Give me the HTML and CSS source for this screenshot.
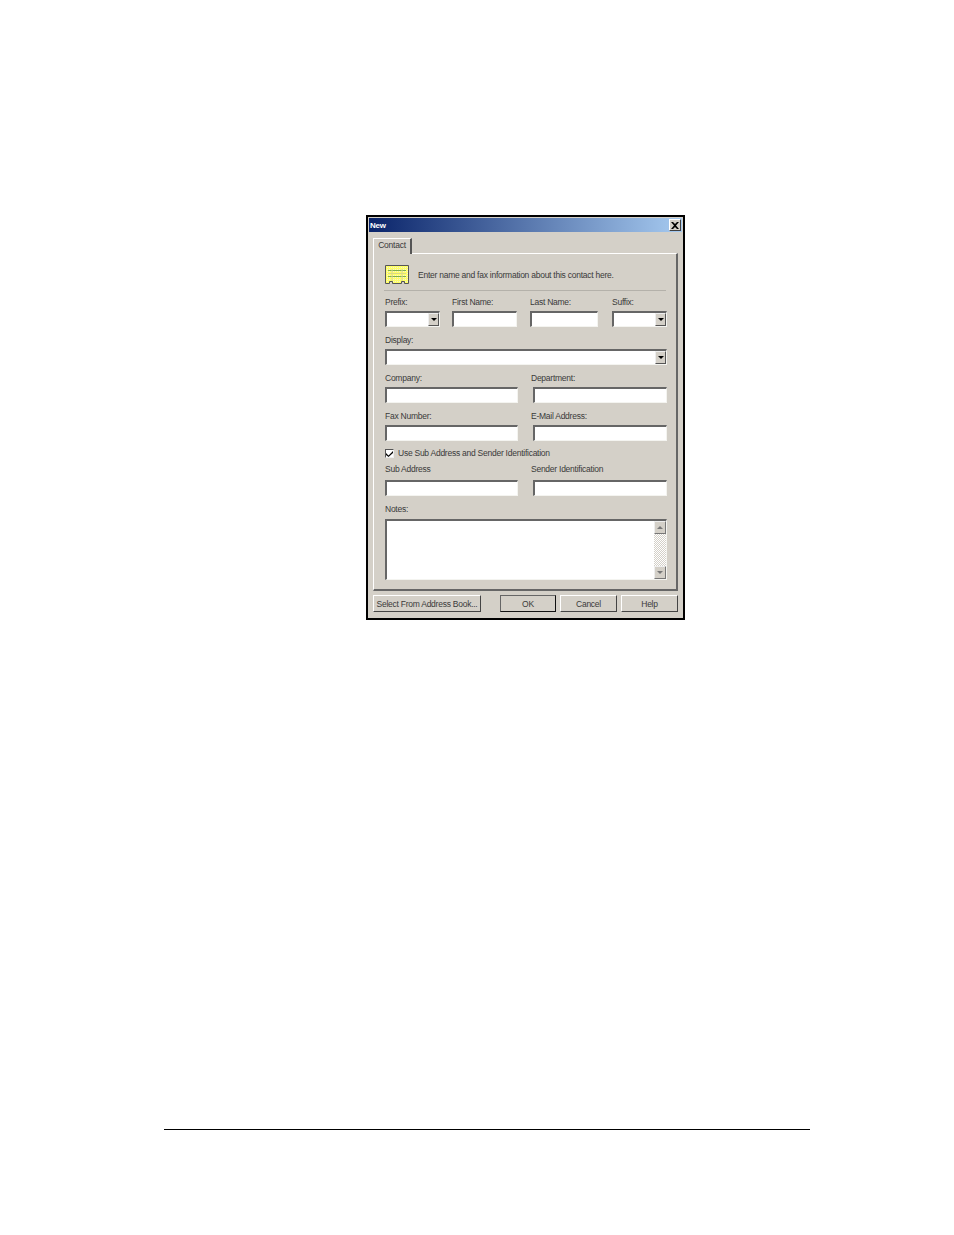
FILE: index.html
```html
<!DOCTYPE html>
<html lang="en">
  <head>
    <meta charset="UTF-8" />
    <title>New Contact</title>
    <link rel="stylesheet" href="styles.css">
  </head>
  <body>
    <div class="dialog">
      <div class="titlebar">
        <span>New</span>
        <span class="close">
          <svg width="8" height="7" viewBox="0 0 8 7"><path d="M0 0h2l2 2 2-2h2L5 3.500 8 7H6L4 5 2 7H0l3-3.500z" fill="#000"/></svg>
        </span>
      </div>
      <div class="tabs"><div class="tab">Contact</div></div>
      <div class="panel">
        <div class="intro">
          <svg class="card" width="24" height="20" viewBox="0 0 24 20">
            <defs>
              <pattern id="dots" width="2" height="2" patternUnits="userSpaceOnUse">
                <rect width="2" height="2" fill="#ffff66"/>
                <rect width="1" height="1" fill="#f4f4d0"/>
              </pattern>
            </defs>
            <path d="M.5.500h23v18h-4v-2h-3v2h-9v-2h-3v2h-4z" fill="url(#dots)" stroke="#555" stroke-width="1"/>
            <path d="M3 5.500h18M3 11.500h18" stroke="#7fb04a" stroke-width="1"/>
            <path d="M3 8.500h18M7 4v12M17 4v12" stroke="#d8d88a" stroke-width="1"/>
          </svg>
          <span>Enter name and fax information about this contact here.</span>
        </div>
        <div class="rule"></div>

        <div class="row names">
          <div class="field w55">
            <label>Prefix:</label>
            <div class="input combo"><span class="drop"><i></i></span></div>
          </div>
          <div class="field w65">
            <label>First Name:</label>
            <div class="input"></div>
          </div>
          <div class="field w68">
            <label>Last Name:</label>
            <div class="input"></div>
          </div>
          <div class="field w55">
            <label>Suffix:</label>
            <div class="input combo"><span class="drop"><i></i></span></div>
          </div>
        </div>

        <div class="row">
          <div class="field">
            <label>Display:</label>
            <div class="input combo"><span class="drop"><i></i></span></div>
          </div>
        </div>

        <div class="row two">
          <div class="field"><label>Company:</label><div class="input"></div></div>
          <div class="field"><label>Department:</label><div class="input"></div></div>
        </div>

        <div class="row two">
          <div class="field"><label>Fax Number:</label><div class="input"></div></div>
          <div class="field"><label>E-Mail Address:</label><div class="input"></div></div>
        </div>

        <div class="check">
          <span class="box">
            <svg width="7" height="7" viewBox="0 0 7 7"><path d="M0 3l2.500 2.500L7 1v2L2.500 7 0 5z" fill="#000"/></svg>
          </span>
          <span>Use Sub Address and Sender Identification</span>
        </div>

        <div class="row two sub">
          <div class="field"><label>Sub Address</label><div class="input"></div></div>
          <div class="field"><label>Sender Identification</label><div class="input"></div></div>
        </div>

        <div class="row notes">
          <div class="field">
            <label>Notes:</label>
            <div class="input area">
              <div class="scroll">
                <span class="arrow"><i class="up"></i></span>
                <span class="track"></span>
                <span class="arrow"><i></i></span>
              </div>
            </div>
          </div>
        </div>
      </div>

      <div class="buttons">
        <button class="book">Select From Address Book...</button>
        <button class="ok">OK</button>
        <button class="cancel">Cancel</button>
        <button class="help">Help</button>
      </div>
    </div>

    <div class="foot"></div>
  </body>
</html>
```

FILE: styles.css
```css
body {
  margin: 0;
  height: 1235px;
  background-color: #fff;
  font-family: "Liberation Sans", Arial, sans-serif;
  font-size: 8.5px;
  letter-spacing: -0.25px;
  color: #3a3a3a;
  overflow: hidden;
}

.dialog {
  box-sizing: border-box;
  width: 319px;
  height: 405px;
  margin: 215px 0 0 366px;
  padding: 1px;
  background-color: #d4d0c8;
  border: 2px solid #000;
}

.titlebar {
  height: 14px;
  padding: 0 1px 0 1px;
  display: flex;
  align-items: center;
  justify-content: space-between;
  background: linear-gradient(to right, #0a246a, #a6caf0);
  color: #fff;
  font-weight: bold;
  font-size: 8px;
}

.close {
  box-sizing: border-box;
  width: 12px;
  height: 12px;
  display: flex;
  align-items: center;
  justify-content: center;
  background-color: #d4d0c8;
  border: 1px solid;
  border-color: #fff #404040 #404040 #fff;
}

.tabs {
  height: 15px;
  margin: 6px 0 0 4px;
  position: relative;
}

.tab {
  box-sizing: border-box;
  width: 39px;
  height: 16px;
  padding-top: 1px;
  text-align: center;
  background-color: #d4d0c8;
  border-top: 1px solid #fff;
  border-left: 1px solid #fff;
  border-right: 2px solid #555;
  position: absolute;
  z-index: 1;
}

.panel {
  box-sizing: border-box;
  width: 305px;
  height: 338px;
  margin-left: 4px;
  padding: 11px 0 0 11px;
  border-top: 1px solid #fff;
  border-left: 1px solid #fff;
  border-right: 2px solid #666;
  border-bottom: 2px solid #666;
}

.intro {
  display: flex;
  align-items: center;
  gap: 9px;
  height: 20px;
}

.rule {
  width: 282px;
  height: 1px;
  margin: 5px 0 5px -1px;
  background-color: #b4b1aa;
}

.row {
  width: 282px;
  margin-bottom: 7px;
}

.names {
  display: grid;
  grid-template-columns: 67px 78px 82px 55px;
}

.two {
  display: grid;
  grid-template-columns: 133px 134px;
  column-gap: 15px;
}

.two .field + .field label {
  margin-left: -2px;
}

.sub {
  margin-bottom: 8px;
}

.field label {
  display: block;
  height: 15px;
  line-height: 12px;
}

.sub .field label {
  height: 17px;
  margin-top: -2px;
}

.notes .field label {
  height: 16px;
  margin-top: -1px;
}

.w55 {
  width: 55px;
}

.w65 {
  width: 65px;
}

.w68 {
  width: 68px;
}

.input {
  box-sizing: border-box;
  height: 16px;
  background-color: #fff;
  border: 1px solid;
  border-color: #666 #f4f4f0 #f4f4f0 #666;
  border-top-width: 2px;
  border-left-width: 2px;
}

.combo {
  display: flex;
  justify-content: flex-end;
  align-items: stretch;
}

.drop {
  width: 11px;
  display: flex;
  align-items: center;
  justify-content: center;
  background-color: #d4d0c8;
  border: 1px solid;
  border-color: #eee #555 #555 #eee;
  box-sizing: border-box;
}

.drop i {
  width: 0;
  height: 0;
  border-left: 3px solid transparent;
  border-right: 3px solid transparent;
  border-top: 3px solid #000;
}

.check {
  display: flex;
  align-items: center;
  gap: 4px;
  height: 12px;
  margin: -1px 0 6px;
}

.box {
  box-sizing: border-box;
  width: 9px;
  height: 9px;
  display: flex;
  background-color: #fff;
  border: 1px solid;
  border-color: #555 #eee #eee #555;
}

.box svg {
  flex: none;
}

.area {
  height: 61px;
  display: flex;
  justify-content: flex-end;
}

.scroll {
  width: 12px;
  display: flex;
  flex-direction: column;
}

.arrow {
  box-sizing: border-box;
  height: 13px;
  display: flex;
  align-items: center;
  justify-content: center;
  background-color: #d4d0c8;
  border: 1px solid;
  border-color: #eee #777 #777 #eee;
}

.arrow i {
  width: 0;
  height: 0;
  border-left: 3px solid transparent;
  border-right: 3px solid transparent;
  border-top: 3px solid #777;
}

.arrow i.up {
  border-top: 0;
  border-bottom: 3px solid #777;
}

.track {
  flex: 1;
  background-color: #fff;
  background-image: conic-gradient(#d4d0c8 25%, #fff 0 50%, #d4d0c8 0 75%, #fff 0);
  background-size: 2px 2px;
}

.buttons {
  display: flex;
  margin: 4px 0 0 4px;
}

button {
  box-sizing: border-box;
  height: 17px;
  padding: 0;
  font-family: inherit;
  font-size: inherit;
  letter-spacing: inherit;
  white-space: nowrap;
  color: inherit;
  background-color: #d4d0c8;
  border: 1px solid;
  border-color: #fff #444 #444 #fff;
}

.book {
  width: 108px;
}

.ok {
  width: 56px;
  margin-left: 19px;
  border: 1px solid;
  border-color: #666 #111 #111 #666;
}

.cancel {
  width: 57px;
  margin-left: 4px;
}

.help {
  width: 57px;
  margin-left: 4px;
}

.foot {
  width: 646px;
  height: 1px;
  margin: 509px 0 0 164px;
  background-color: #000;
}
```
